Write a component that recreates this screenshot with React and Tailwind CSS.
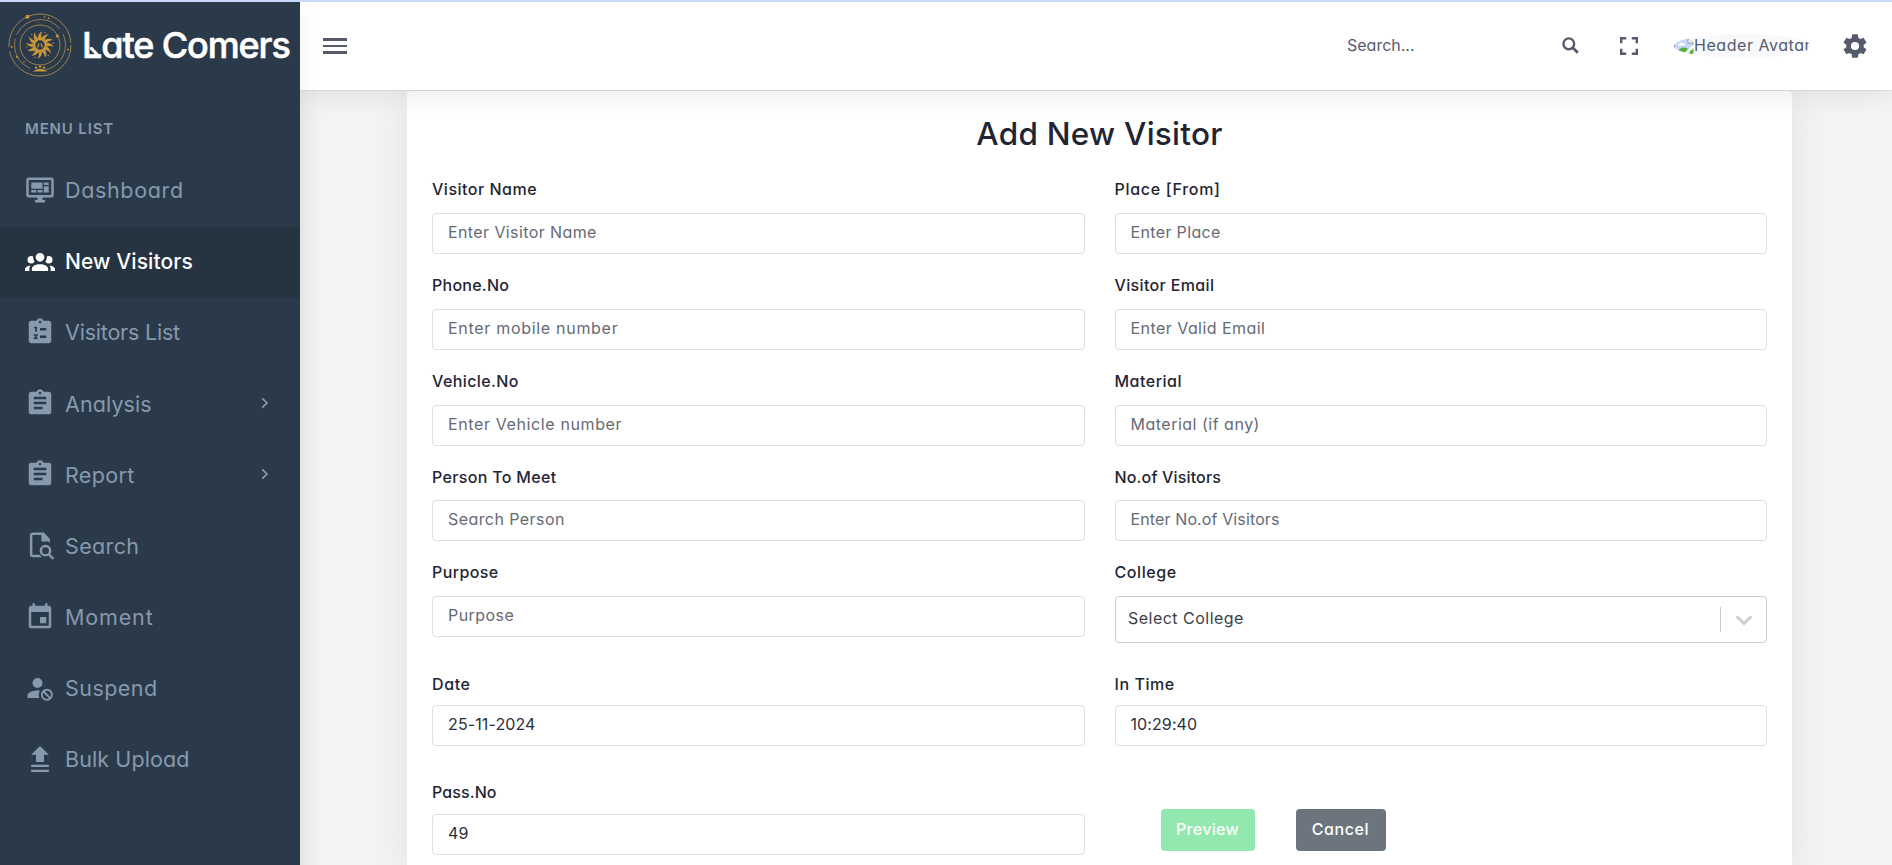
import React from "react";

const ICONS = {
  dashboard:
    "M21,16V4H3V16H21M21,2A2,2 0 0,1 23,4V16A2,2 0 0,1 21,18H14V20H16V22H8V20H10V18H3C1.89,18 1,17.1 1,16V4C1,2.89 1.89,2 3,2H21M5,6H14V11H5V6M15,6H19V8H15V6M19,9V14H15V9H19M5,12H9V14H5V12M10,12H14V14H10V12Z",
  group:
    "M12,5.5A3.5,3.5 0 0,1 15.5,9A3.5,3.5 0 0,1 12,12.5A3.5,3.5 0 0,1 8.5,9A3.5,3.5 0 0,1 12,5.5M5,8C5.56,8 6.08,8.15 6.53,8.42C6.38,9.85 6.8,11.27 7.66,12.38C7.16,13.34 6.16,14 5,14A3,3 0 0,1 2,11A3,3 0 0,1 5,8M19,8A3,3 0 0,1 22,11A3,3 0 0,1 19,14C17.84,14 16.84,13.34 16.34,12.38C17.2,11.27 17.62,9.85 17.47,8.42C17.92,8.15 18.44,8 19,8M5.5,18.25C5.5,16.18 8.41,14.5 12,14.5C15.59,14.5 18.5,16.18 18.5,18.25V20H5.5V18.25M0,20V18.5C0,17.11 1.89,15.94 4.45,15.6C3.86,16.28 3.5,17.22 3.5,18.25V20H0M24,20H20.5V18.25C20.5,17.22 20.14,16.28 19.55,15.6C22.11,15.94 24,17.11 24,18.5V20Z",
  numbered:
    "M19 3H14.82C14.4 1.84 13.3 1 12 1S9.6 1.84 9.18 3H5C3.9 3 3 3.9 3 5V19C3 20.1 3.9 21 5 21H19C20.1 21 21 20.1 21 19V5C21 3.9 20.1 3 19 3M12 3C12.55 3 13 3.45 13 4S12.55 5 12 5 11 4.55 11 4 11.45 3 12 3M10.2 17.6H7V16.5L8.7 14.9H7V13.7H10.2V14.9L8.6 16.4H10.2V17.6M9.6 11.7H8.2V8.9H7.2V7.7H9.6V11.7M17 16.8H12V14.8H17V16.8M17 10.8H12V8.8H17V10.8Z",
  clipboard:
    "M17,9H7V7H17M17,13H7V11H17M14,17H7V15H14M12,3A1,1 0 0,1 13,4A1,1 0 0,1 12,5A1,1 0 0,1 11,4A1,1 0 0,1 12,3M19,3H14.82C14.4,1.84 13.3,1 12,1C10.7,1 9.6,1.84 9.18,3H5A2,2 0 0,0 3,5V19A2,2 0 0,0 5,21H19A2,2 0 0,0 21,19V5A2,2 0 0,0 19,3Z",
  event:
    "M19 19H5V8H19M16 1V3H8V1H6V3H5C3.89 3 3 3.89 3 5V19A2 2 0 0 0 5 21H19A2 2 0 0 0 21 19V5C21 3.89 20.1 3 19 3H18V1M17 12H12V17H17V12Z",
  suspend:
    "M10 4A4 4 0 1 1 10 12A4 4 0 1 1 10 4M17.5 12.6A4.8 4.8 0 1 1 17.5 22.2A4.8 4.8 0 1 1 17.5 12.6M17.5 14.1C19.4 14.1 20.8 15.6 20.8 17.4C20.8 18.06 20.65 18.68 20.3 19.1L15.8 14.6C16.3 14.25 16.94 14.1 17.5 14.1M14.7 15.7L19.2 20.2C18.6 20.55 18.06 20.7 17.5 20.7C15.64 20.7 14.2 19.26 14.2 17.4C14.2 16.84 14.35 16.22 14.7 15.7M12 14.2C11.36 14.07 10.69 14 10 14C5.58 14 2 15.79 2 18V20H11.5C11.18 19.23 11 18.39 11 17.5C11 16.29 11.37 15.13 12 14.2Z",
  upload: "M4.9 8.6L12 1.6L19.1 8.6H15.2V14.4H8.8V8.6H4.9M4.9 18.4V16.6H19.1V18.4H4.9M4.9 22.4V20.6H19.1V22.4H4.9Z",
};

function Icon({ name }) {
  return (
    <svg viewBox="0 0 24 24" className="size-[30px] shrink-0" fill="currentColor" fillRule="evenodd">
      {name === "filesearch" ? (
        <g>
          <path d="M13.6 1.2H4.6C3.4 1.2 2.4 2.2 2.4 3.3V18.7C2.4 19.9 3.4 20.9 4.6 20.9H12L10.2 19H4.4V3.2H11.6V8.4L17 8.4L18.4 9.6V6.4L13.6 1.2Z" transform="translate(1.5 0)" />
          <path d="M16.4 11a4.7 4.7 0 1 0 0 9.4 4.7 4.7 0 0 0 0-9.4m0 2a2.7 2.7 0 1 1 0 5.4 2.7 2.7 0 0 1 0-5.4Z" />
          <path d="M18.2 19.2L19.6 17.8L23.4 21.6L22 23Z" />
        </g>
      ) : (
        <path d={ICONS[name]} />
      )}
    </svg>
  );
}

const MENU = [
  { icon: "dashboard", label: "Dashboard", track: "tracking-[0.65px]" },
  { icon: "group", label: "New Visitors", track: "tracking-[0.1px]", active: true },
  { icon: "numbered", label: "Visitors List", track: "tracking-[-0.2px]", lift: true },
  { icon: "clipboard", label: "Analysis", track: "tracking-[0.1px]", lift: true, more: true },
  { icon: "clipboard", label: "Report", track: "tracking-[0.35px]", lift: true, more: true },
  { icon: "filesearch", label: "Search", track: "tracking-[0.35px]" },
  { icon: "event", label: "Moment", track: "tracking-[0.85px]", lift: true },
  { icon: "suspend", label: "Suspend", track: "tracking-[0.45px]" },
  { icon: "upload", label: "Bulk Upload", track: "tracking-[0.1px]", lift: true },
];

function Emblem() {
  const rays = Array.from({ length: 12 }, (_, i) => i * 30);
  return (
    <svg viewBox="0 0 64 64" className="-mt-[2px] size-16 shrink-0" fill="none" stroke="#a98b4c">
      <circle cx="32" cy="32" r="31" strokeWidth="0.9" strokeDasharray="91 4 97 2.8" />
      <circle cx="32" cy="32" r="25.5" strokeWidth="0.8" strokeDasharray="56 6 36 4 52 6.2" strokeDashoffset="12" />
      <circle cx="32" cy="32" r="20" strokeWidth="0.9" />
      <g fill="#c8963a" stroke="none">
        <circle cx="19.5" cy="3.8" r="2" />
        <circle cx="49.3" cy="23" r="1.5" />
        <circle cx="9" cy="44" r="1.1" />
        <circle cx="3.8" cy="34" r="0.9" />
        <circle cx="60" cy="36.5" r="0.9" />
        <circle cx="36.5" cy="3.8" r="0.7" />
        <circle cx="40.5" cy="5.4" r="0.8" />
        <circle cx="16" cy="49" r="0.7" />
        <circle cx="30.5" cy="9.5" r="0.6" />
        {rays.map((a) => (
          <path key={a} d="M29.9 26Q29.4 21 34.2 18.2Q32.2 22 33.8 26Z" transform={`rotate(${a} 32 32)`} />
        ))}
        {rays.slice(0, 6).map((a) => (
          <circle key={a} cx="37" cy="19.6" r="0.7" transform={`rotate(${a * 2} 32 32)`} />
        ))}
        <path d="M24.5 58.6Q32 54 39.5 58.6Z" />
        <path d="M27 58Q32 53.5 37 58Z" />
        <circle cx="28" cy="54.6" r="1.2" />
        <circle cx="32" cy="53.6" r="1.2" />
        <circle cx="36" cy="54.6" r="1.2" />
      </g>
      <circle cx="32" cy="32" r="5.8" stroke="#c8963a" strokeWidth="2.2" />
      <path d="M29.5 34.5L31 30.5M34.5 34.5L33 30.5" stroke="#c8963a" strokeWidth="1.2" />
    </svg>
  );
}

function Sidebar() {
  return (
    <aside className="z-20 flex w-[300px] shrink-0 flex-col bg-[#2b3a4a] shadow-[0_8px_24px_rgba(18,38,63,0.06)]">
      <div className="flex h-[88px] items-center pl-2">
        <Emblem />
        <div className="relative ml-[10px] -mt-[2px] text-[36px] leading-[44px] font-medium tracking-[-1.1px] whitespace-nowrap text-white [-webkit-text-stroke:0.6px_white]">
          Late Comers
          <svg viewBox="0 0 12 12" className="absolute top-[24px] left-[8px] size-3">
            <path d="M1.5 1.5L9 9.5" stroke="white" strokeWidth="3.2" strokeLinecap="round" />
          </svg>
        </div>
      </div>
      <div className="flex h-[66px] items-center pt-[13px] pl-[25px] text-[15px] font-semibold tracking-[0.85px] text-[#8699ad]">
        MENU LIST
      </div>
      <nav className="flex flex-col text-[21.5px]">
        {MENU.map((m) => (
          <a
            key={m.label}
            className={
              m.active
                ? "flex h-[71.2px] items-center bg-[#263340] pr-[30px] pb-[2px] pl-[25px] font-medium text-white"
                : "flex h-[71.2px] items-center pr-[30px] pb-[3px] pl-[25px] font-normal text-[#8699ad]"
            }
          >
            <span className={m.lift || m.active ? "-mt-px" : ""}>
              <Icon name={m.icon} />
            </span>
            <span className={"ml-[10px] grow " + (m.active ? "text-[21px] " : "") + m.track}>{m.label}</span>
            {m.more && (
              <svg viewBox="0 0 10 12" className="-mt-px h-3 w-[10px]" fill="none" stroke="currentColor" strokeWidth="1.7">
                <path d="M2.2 1.3L7 6L2.2 10.7" />
              </svg>
            )}
          </a>
        ))}
      </nav>
    </aside>
  );
}

function Header() {
  return (
    <header className="z-10 flex h-[88px] shrink-0 items-center bg-white pl-[23px] text-[#555b6d] shadow-[0_4px_26px_rgba(0,0,0,0.09),0_1px_0_rgba(0,0,0,0.05)]">
      <div className="flex w-[24px] flex-col gap-1">
        <span className="h-[2.5px] bg-current" />
        <span className="h-[2.5px] bg-current" />
        <span className="h-[2.5px] bg-current" />
      </div>
      <div className="ml-auto w-[215px] pb-[2px] text-[16px]">Search...</div>
      <svg viewBox="0 0 17 17" className="-mt-[2px] size-[17px]" fill="none" stroke="currentColor">
        <circle cx="6.8" cy="6.8" r="5.4" strokeWidth="2.4" />
        <path d="M10.8 10.8L15.8 15.8" strokeWidth="2.8" />
      </svg>
      <svg viewBox="0 0 18 18" className="ml-[41px] size-[18px]" fill="none" stroke="currentColor" strokeWidth="2.4">
        <path d="M1.2 6.2V1.2H6.2M11.8 1.2H16.8V6.2M16.8 11.8V16.8H11.8M6.2 16.8H1.2V11.8" />
      </svg>
      <div className="ml-[36px] flex h-6 w-[137px] items-center overflow-hidden rounded-[50%] bg-[#f8f9fb]">
        <svg viewBox="0 0 20 16" className="h-4 w-5 shrink-0">
          <path d="M0.5 0.5H14L19 5V15.5H0.5Z" fill="#c5d6f8" stroke="#9a9a9a" />
          <path d="M4 7.5Q4 5.5 6.2 5.5Q8 3.4 10 5.5Q12 6 11.5 7.5Z" fill="#fff" />
          <path d="M3 15Q5 9.5 10 9.5Q13 9.5 14 11L10.5 15Z" fill="#53b03a" />
          <path d="M20 6L9.5 16H13L20 10Z" fill="#fff" />
          <path d="M16 15.5V13L19 11V15.5Z" fill="#53b03a" />
          <path d="M14 0.5V5H19" fill="#fff" stroke="#9a9a9a" />
        </svg>
        <span className="pb-[2px] text-[16px] tracking-[0.55px] whitespace-nowrap">Header Avatar</span>
      </div>
      <svg viewBox="0 0 24 24" className="mr-[23px] ml-[30px] size-7" fill="currentColor">
        <path d="M12,15.5A3.5,3.5 0 0,1 8.5,12A3.5,3.5 0 0,1 12,8.5A3.5,3.5 0 0,1 15.5,12A3.5,3.5 0 0,1 12,15.5M19.43,12.97C19.47,12.65 19.5,12.33 19.5,12C19.5,11.67 19.47,11.34 19.43,11L21.54,9.37C21.73,9.22 21.78,8.95 21.66,8.73L19.66,5.27C19.54,5.05 19.27,4.96 19.05,5.05L16.56,6.05C16.04,5.66 15.5,5.32 14.87,5.07L14.5,2.42C14.46,2.18 14.25,2 14,2H10C9.75,2 9.54,2.18 9.5,2.42L9.13,5.07C8.5,5.32 7.96,5.66 7.44,6.05L4.95,5.05C4.73,4.96 4.46,5.05 4.34,5.27L2.34,8.73C2.21,8.95 2.27,9.22 2.46,9.37L4.57,11C4.53,11.34 4.5,11.67 4.5,12C4.5,12.33 4.53,12.65 4.57,12.97L2.46,14.63C2.27,14.78 2.21,15.05 2.34,15.27L4.34,18.73C4.46,18.95 4.73,19.03 4.95,18.95L7.44,17.94C7.96,18.34 8.5,18.68 9.13,18.93L9.5,21.58C9.54,21.82 9.75,22 10,22H14C14.25,22 14.46,21.82 14.5,21.58L14.87,18.93C15.5,18.67 16.04,18.34 16.56,17.94L19.05,18.95C19.27,19.03 19.54,18.95 19.66,18.73L21.66,15.27C21.78,15.05 21.73,14.78 21.54,14.63L19.43,12.97Z" />
      </svg>
    </header>
  );
}

const LEFT = [
  { label: "Visitor Name", lt: "tracking-[0.5px]", text: "Enter Visitor Name", tt: "tracking-[0.4px]" },
  { label: "Phone.No", lt: "tracking-[0.25px]", text: "Enter mobile number", tt: "tracking-[0.7px]" },
  { label: "Vehicle.No", lt: "tracking-[0.4px]", text: "Enter Vehicle number", tt: "tracking-[0.62px]" },
  { label: "Person To Meet", lt: "tracking-[0.33px]", text: "Search Person", tt: "tracking-[0.43px]" },
  { label: "Purpose", lt: "tracking-[0.38px]", text: "Purpose", tt: "tracking-[0.45px]", row: "h-[111.2px]" },
  { label: "Date", lt: "tracking-[0.6px]", text: "25-11-2024", tt: "tracking-[0.12px]", value: true, row: "h-[108px]", gap: "mt-[9.7px]" },
  { label: "Pass.No", lt: "tracking-[0.1px]", text: "49", tt: "tracking-[0.1px]", value: true, gap: "mt-[10.5px]" },
];

const RIGHT = [
  { label: "Place [From]", lt: "tracking-[0.7px]", text: "Enter Place", tt: "tracking-[0.35px]" },
  { label: "Visitor Email", lt: "tracking-[0.35px]", text: "Enter Valid Email", tt: "tracking-[0.45px]" },
  { label: "Material", lt: "tracking-[0.5px]", text: "Material (if any)", tt: "tracking-[0.5px]" },
  { label: "No.of Visitors", lt: "tracking-[0.15px]", text: "Enter No.of Visitors", tt: "tracking-[0.12px]" },
  { label: "College", lt: "tracking-[0.6px]", text: "Select College", tt: "tracking-[0.48px]", select: true, row: "h-[111.2px]" },
  { label: "In Time", lt: "tracking-[0.55px]", text: "10:29:40", tt: "tracking-[0.1px]", value: true, row: "h-[108px]", gap: "mt-[9.7px]" },
];

function Field({ f }) {
  return (
    <div className={f.row || "h-[95.75px]"}>
      <div className={"h-6 text-[16px] leading-6 font-medium text-[#1f2533] " + f.lt}>{f.label}</div>
      {f.select ? (
        <div className="mt-[11.8px] flex h-[47px] items-center rounded border border-[#cccccc] pl-[12.5px]">
          <span className={"grow pb-[3px] text-[16px] text-[#3c3f45] " + f.tt}>{f.text}</span>
          <span className="h-[25px] w-px bg-[#cccccc]" />
          <svg viewBox="0 0 16 10" className="mt-[2px] mr-[14px] ml-[15px] h-[10px] w-4" fill="none" stroke="#cccccc" strokeWidth="2.8">
            <path d="M1.5 1.3L8 7.6L14.5 1.3" strokeLinecap="round" />
          </svg>
        </div>
      ) : (
        <div
          className={
            "flex h-[41px] items-center rounded border border-[#dcdfe5] px-[15px] pb-[3px] text-[16px] " +
            (f.gap || "mt-[11.8px]") +
            (f.value ? " text-[#2b3040] " : " text-[#666a75] ") +
            f.tt
          }
        >
          {f.text}
        </div>
      )}
    </div>
  );
}

export default function App() {
  return (
    <div className="flex h-[865px] w-[1892px] flex-col overflow-hidden border-t-2 border-[#c9d9f9] bg-[#f4f4f4] font-['Inter',sans-serif] [font-feature-settings:'cv11']">
      <div className="flex grow">
        <Sidebar />
        <div className="flex grow flex-col shadow-[inset_30px_0_30px_-24px_rgba(0,0,0,0.05)]">
          <Header />
          <main className="mt-px ml-[107px] h-[790px] w-[1385px] rounded-t bg-white px-[25px] shadow-[0_0_44px_rgba(0,0,0,0.08)]">
            <h1 className="pt-[22px] text-center text-[31.5px] leading-[42px] font-medium tracking-[0.25px] text-[#1f2533]">
              Add New Visitor
            </h1>
            <div className="mt-[22.4px] grid grid-cols-2 gap-[30px]">
              <div className="flex flex-col">
                {LEFT.map((f) => (
                  <Field key={f.label} f={f} />
                ))}
              </div>
              <div className="flex flex-col">
                {RIGHT.map((f) => (
                  <Field key={f.label} f={f} />
                ))}
                <div className="mt-[29.6px] ml-[46px] flex gap-[41px] text-[16px] font-medium text-white">
                  <button className="h-[42px] w-[94px] rounded bg-[#92e8ae] pb-[2px] tracking-[0.3px]">Preview</button>
                  <button className="h-[42px] w-[90px] rounded bg-[#6c757d] pb-[2px] tracking-[0.6px]">Cancel</button>
                </div>
              </div>
            </div>
          </main>
        </div>
      </div>
    </div>
  );
}
